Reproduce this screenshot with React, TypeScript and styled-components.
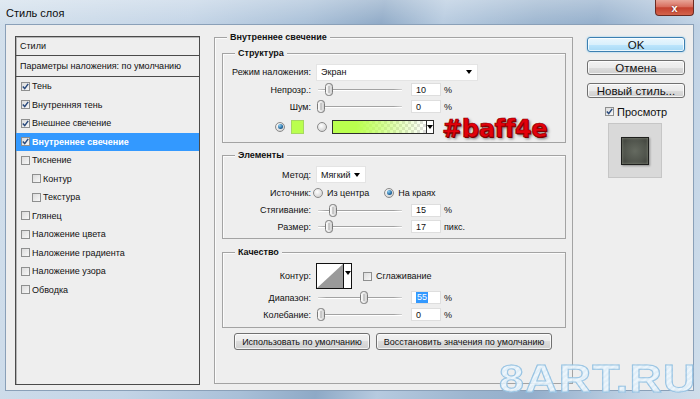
import React from 'react';
import styled, { createGlobalStyle } from 'styled-components';

const GlobalStyle = createGlobalStyle`
  html, body {
    margin: 0;
    padding: 0;
    background: #ffffff;
  }
  body {
    font-family: "Liberation Sans", Arial, sans-serif;
    font-size: 9px;
    color: #111;
  }
`;

const Window = styled.div`
  position: relative;
  width: 700px;
  height: 399px;
  box-sizing: border-box;
  padding: 0 6px 8px 5px;
  display: flex;
  flex-direction: column;
  overflow: hidden;
  background:
    linear-gradient(180deg, rgba(255, 255, 255, 0.3), rgba(255, 255, 255, 0) 26px),
    linear-gradient(100deg, #d3e0ec 0%, #c3d4e6 25%, #a9c0d8 40%, #8ea9c6 50%, #b6cadf 58%, #9cb5cf 70%, #93aecb 78%, #c2d4e6 92%, #d0deeb 100%);
`;

const TitleBar = styled.div`
  height: 24px;
  display: flex;
  justify-content: space-between;
  align-items: flex-start;
  flex-shrink: 0;
`;

const Title = styled.div`
  margin: 6px 0 0 1px;
  font-size: 11px;
  line-height: 14px;
  color: #0c0c0c;
`;

const CloseButton = styled.div`
  width: 39px;
  height: 16px;
  box-sizing: border-box;
  display: flex;
  align-items: center;
  justify-content: center;
  border: 1px solid #6b2b22;
  border-top: none;
  border-radius: 0 0 4px 4px;
  background: linear-gradient(180deg, #e8a598 0%, #d86e5e 45%, #c4412f 52%, #d4644c 100%);
  color: #fff;
  font-size: 11px;
  font-weight: 700;
  text-shadow: 0 0 2px #5a1a10;
`;

const Client = styled.div`
  flex: 1;
  display: flex;
  align-items: flex-start;
  padding: 11px 0 0 9px;
  border: 1px solid #8aa0b8;
  background: #eeeeee;
`;

/* ---------- styles list ---------- */

const StylesPanel = styled.div`
  width: 185px;
  height: 349px;
  box-sizing: border-box;
  flex-shrink: 0;
  display: flex;
  flex-direction: column;
  border: 1px solid #4a4a4a;
  box-shadow: inset 1px 1px 0 #b5b5b5;
  background: #eeeeee;
`;

const PanelHeader = styled.div<{ $h: number }>`
  height: ${p => p.$h}px;
  display: flex;
  align-items: center;
  padding-left: 4px;
  border-bottom: 1px solid #4a4a4a;
`;

const EffectRow = styled.div<{ $indent?: boolean; $active?: boolean }>`
  height: 18.5px;
  display: flex;
  align-items: center;
  gap: 2px;
  padding-left: ${p => (p.$indent ? 16 : 5)}px;
  background: ${p => (p.$active ? '#3399ff' : 'transparent')};
  color: ${p => (p.$active ? '#ffffff' : '#111')};
  font-weight: ${p => (p.$active ? 700 : 400)};
`;

const Box = styled.span`
  width: 9px;
  height: 9px;
  box-sizing: border-box;
  flex-shrink: 0;
  display: inline-flex;
  align-items: center;
  justify-content: center;
  border: 1px solid #8e8f8f;
  background: linear-gradient(135deg, #dcdcdc, #f7f7f7);
`;

const Check = ({ on }: { on?: boolean }) => (
  <Box>
    {on && (
      <svg width="7" height="7" viewBox="0 0 7 7">
        <path d="M0.8 3.6 L2.7 5.6 L6.2 0.9" fill="none" stroke="#2a4a7c" strokeWidth="1.5" />
      </svg>
    )}
  </Box>
);

/* ---------- settings groups ---------- */

const Group = styled.div<{ $outer?: boolean }>`
  box-sizing: border-box;
  border: 1px solid #a3a3a3;
  box-shadow: inset 1px 1px 0 #fbfbfb;
  display: flex;
  flex-direction: column;
  ${p =>
    p.$outer
      ? `
    width: 359px;
    height: 347px;
    margin: 1px 14px 0 14px;
    padding: 0 6px 0 7px;
    flex-shrink: 0;
  `
      : ''}
`;

const Caption = styled.div<{ $indent: number }>`
  align-self: flex-start;
  margin: -7px 0 0 ${p => p.$indent}px;
  padding: 0 3px;
  background: #eeeeee;
  font-weight: 700;
  line-height: 12px;
  color: #111;
`;

const Section = styled(Group)<{ $top: number; $bottom: number }>`
  margin-top: ${p => p.$top}px;
  padding-bottom: ${p => p.$bottom}px;
`;

const FieldRow = styled.div<{ $h: number; $top?: number }>`
  height: ${p => p.$h}px;
  margin-top: ${p => p.$top ?? 0}px;
  display: flex;
  align-items: center;
`;

const Label = styled.span`
  width: 88px;
  margin-right: 5px;
  text-align: right;
  flex-shrink: 0;
`;

const Dropdown = styled.div<{ $w: number }>`
  width: ${p => p.$w}px;
  height: 17px;
  box-sizing: border-box;
  display: flex;
  align-items: center;
  justify-content: space-between;
  padding: 0 5px 0 4px;
  background: #ffffff;
  border: 1px solid #e4e4e4;
`;

const Caret = styled.span`
  width: 0;
  height: 0;
  border-left: 3.5px solid transparent;
  border-right: 3.5px solid transparent;
  border-top: 4px solid #000;
`;

const Track = styled.div`
  position: relative;
  width: 84px;
  height: 13px;
  margin-left: 2px;
  flex-shrink: 0;
  &::before {
    content: '';
    position: absolute;
    left: 0;
    right: 0;
    top: 6px;
    height: 1px;
    background: linear-gradient(90deg, #d0d0d0, #a2a2a2 10%, #a2a2a2 90%, #d0d0d0);
    box-shadow: 0 1px 0 #ffffff;
  }
`;

const Thumb = styled.svg`
  position: absolute;
  top: 0;
`;

const Slider = ({ value }: { value: number }) => (
  <Track>
    <Thumb width="8" height="13" viewBox="0 0 8 13" style={{ left: `${value * 78 - 1}px` }}>
      <defs>
        <linearGradient id="thumbFill" x1="0" x2="1" y1="0" y2="0">
          <stop offset="0" stopColor="#ffffff" />
          <stop offset="1" stopColor="#cfcfcf" />
        </linearGradient>
      </defs>
      <rect x="0.5" y="0.5" width="7" height="12" rx="3" fill="url(#thumbFill)" stroke="#7a7a7a" />
      <line x1="4" y1="3" x2="4" y2="10" stroke="#a8a8a8" />
    </Thumb>
  </Track>
);

const NumberField = styled.div`
  width: 30px;
  height: 13px;
  box-sizing: border-box;
  margin-left: 9px;
  padding-left: 4px;
  display: flex;
  align-items: center;
  background: #ffffff;
  border: 1px solid #dedede;
  flex-shrink: 0;
`;

const Selected = styled.span`
  background: #3399ff;
  color: #ffffff;
  padding: 0 1px;
  line-height: 11px;
`;

const Unit = styled.span`
  margin-left: 3px;
`;

const Radio = styled.span<{ $on?: boolean; $gap?: number }>`
  width: 10px;
  height: 10px;
  box-sizing: border-box;
  flex-shrink: 0;
  margin-left: ${p => p.$gap ?? 0}px;
  border-radius: 50%;
  border: 1px solid #8a8a8a;
  background: radial-gradient(circle at 40% 35%, #ffffff, #d6d6d6 75%);
  display: inline-flex;
  align-items: center;
  justify-content: center;
  &::after {
    content: '';
    display: ${p => (p.$on ? 'block' : 'none')};
    width: 5px;
    height: 5px;
    border-radius: 50%;
    background: radial-gradient(circle at 35% 30%, #8fd0f5, #1e6399 65%, #0d3559);
  }
`;

const OptionText = styled.span`
  margin-left: 4px;
`;

const Swatch = styled.span`
  width: 13px;
  height: 14px;
  box-sizing: border-box;
  margin-left: 6px;
  background: #baff4e;
  border: 1px solid #a6d862;
`;

const GradientPicker = styled.div`
  width: 102px;
  height: 14px;
  box-sizing: border-box;
  margin-left: 5px;
  display: flex;
  border: 1px solid #2e2e2e;
`;

const GradientFill = styled.div`
  flex: 1;
  background:
    linear-gradient(90deg, #baff4e 0%, #baff4e 25%, rgba(186, 255, 78, 0) 100%),
    repeating-conic-gradient(#dedede 0% 25%, #ffffff 0% 50%) 0 0 / 6px 6px;
`;

const PickerCaret = styled.div`
  width: 7px;
  display: flex;
  justify-content: center;
  padding-top: 4px;
  box-sizing: border-box;
  background: #ffffff;
  border-left: 1px solid #2e2e2e;
`;

const ColorNote = styled.span`
  margin: 4px 0 0 8px;
  font-family: "DejaVu Sans", "Liberation Sans", sans-serif;
  font-size: 24px;
  line-height: 24px;
  font-weight: 700;
  color: #e3000b;
  -webkit-text-stroke: 0.7px #8c0000;
  text-shadow: 1px 1px 0 #7a0000, 2px 2px 3px rgba(0, 0, 0, 0.5);
  letter-spacing: -0.3px;
`;

const CurveBox = styled.div`
  width: 36px;
  height: 26px;
  box-sizing: border-box;
  display: flex;
  border: 1px solid #111;
  background: #ffffff;
  flex-shrink: 0;
`;

const CurveCaret = styled.div`
  width: 8px;
  display: flex;
  justify-content: center;
  padding-top: 7px;
  box-sizing: border-box;
  border-left: 1px solid #111;
`;

const CheckLabel = styled.label<{ $gap: number }>`
  display: flex;
  align-items: center;
  gap: 4px;
  margin-left: ${p => p.$gap}px;
`;

const ButtonRow = styled.div`
  display: flex;
  gap: 6px;
  margin: 5px 0 0 12px;
`;

const PushButton = styled.div<{ $w: number }>`
  width: ${p => p.$w}px;
  height: 17px;
  box-sizing: border-box;
  display: flex;
  align-items: center;
  justify-content: center;
  border: 1px solid #707070;
  border-radius: 3px;
  background: linear-gradient(180deg, #f2f2f2, #ebebeb 50%, #dddddd 50%, #cfcfcf);
  box-shadow: inset 0 0 0 1px rgba(255, 255, 255, 0.75);
  color: #111;
`;

/* ---------- right column ---------- */

const SideColumn = styled.div`
  width: 98px;
  margin-top: 1px;
  display: flex;
  flex-direction: column;
  flex-shrink: 0;
`;

const DialogButton = styled.div<{ $primary?: boolean }>`
  height: 15px;
  box-sizing: border-box;
  margin-bottom: 8px;
  display: flex;
  align-items: center;
  justify-content: center;
  font-size: 11.5px;
  color: #111;
  border-radius: 3px;
  border: 1px solid ${p => (p.$primary ? '#3c7fb1' : '#707070')};
  background: ${p =>
    p.$primary
      ? 'linear-gradient(180deg, #eaf6fd, #d9f0fc 50%, #bee6fd 50%, #a7d9f5)'
      : 'linear-gradient(180deg, #f2f2f2, #ebebeb 50%, #dddddd 50%, #cfcfcf)'};
  box-shadow: inset 0 0 0 1px rgba(255, 255, 255, 0.75)
    ${p => (p.$primary ? ', 0 0 2px #7cc4ee' : '')};
`;

const PreviewToggle = styled.label`
  height: 13px;
  margin: -1px 0 0 18px;
  display: flex;
  align-items: center;
  gap: 3px;
  font-size: 11px;
  color: #111;
`;

const PreviewFrame = styled.div`
  width: 54px;
  height: 55px;
  box-sizing: border-box;
  margin: 5px 0 0 21px;
  display: flex;
  align-items: center;
  justify-content: center;
  background: #d9d9d9;
  border: 1px solid #c6c6c6;
`;

const PreviewTile = styled.div`
  width: 28px;
  height: 28px;
  box-sizing: border-box;
  border: 1px solid #1e1f1d;
  background: radial-gradient(circle at 50% 50%, #656a60, #50544c 60%, #393b36);
  box-shadow: inset 0 0 3px #8a9080, 1px 1px 2px rgba(0, 0, 0, 0.35);
`;

const Watermark = styled.div`
  position: absolute;
  left: 499px;
  top: 360px;
  font-size: 38px;
  line-height: 38px;
  font-weight: 700;
  letter-spacing: 1px;
  transform: scaleX(1.18);
  transform-origin: left top;
  color: transparent;
  background: repeating-linear-gradient(135deg, rgba(196, 226, 246, 0.75) 0 2px, rgba(160, 204, 234, 0.75) 2px 4px);
  -webkit-background-clip: text;
  background-clip: text;
  -webkit-text-stroke: 1px rgba(125, 178, 218, 0.65);
  text-shadow: 0 0 1px rgba(255, 255, 255, 0.6);
  pointer-events: none;
`;

const effects = [
  { label: 'Тень', on: true },
  { label: 'Внутренняя тень', on: true },
  { label: 'Внешнее свечение', on: true },
  { label: 'Внутреннее свечение', on: true, active: true },
  { label: 'Тиснение' },
  { label: 'Контур', indent: true },
  { label: 'Текстура', indent: true },
  { label: 'Глянец' },
  { label: 'Наложение цвета' },
  { label: 'Наложение градиента' },
  { label: 'Наложение узора' },
  { label: 'Обводка' },
];

const SliderField = ({
  label,
  value,
  text,
  unit,
  h,
  highlight,
}: {
  label: string;
  value: number;
  text: string;
  unit: string;
  h: number;
  highlight?: boolean;
}) => (
  <FieldRow $h={h}>
    <Label>{label}</Label>
    <Slider value={value} />
    <NumberField>{highlight ? <Selected>{text}</Selected> : text}</NumberField>
    <Unit>{unit}</Unit>
  </FieldRow>
);

const App: React.FC = () => (
  <>
    <GlobalStyle />
    <Window>
      <TitleBar>
        <Title>Стиль слоя</Title>
        <CloseButton>x</CloseButton>
      </TitleBar>

      <Client>
        <StylesPanel>
          <PanelHeader $h={18}>Стили</PanelHeader>
          <PanelHeader $h={20}>Параметры наложения: по умолчанию</PanelHeader>
          {effects.map(e => (
            <EffectRow key={e.label} $indent={e.indent} $active={e.active}>
              <Check on={e.on} />
              <span>{e.label}</span>
            </EffectRow>
          ))}
        </StylesPanel>

        <Group $outer>
          <Caption $indent={5}>Внутреннее свечение</Caption>

          <Section $top={10} $bottom={7}>
            <Caption $indent={12}>Структура</Caption>
            <FieldRow $h={18} $top={4}>
              <Label>Режим наложения:</Label>
              <Dropdown $w={162}>
                <span>Экран</span>
                <Caret />
              </Dropdown>
            </FieldRow>
            <SliderField label="Непрозр.:" value={0.1} text="10" unit="%" h={17} />
            <SliderField label="Шум:" value={0} text="0" unit="%" h={17} />
            <FieldRow $h={17} $top={3}>
              <Radio $on $gap={52} />
              <Swatch />
              <Radio $gap={13} />
              <GradientPicker>
                <GradientFill />
                <PickerCaret>
                  <Caret />
                </PickerCaret>
              </GradientPicker>
              <ColorNote>#baff4e</ColorNote>
            </FieldRow>
          </Section>

          <Section $top={12} $bottom={3}>
            <Caption $indent={12}>Элементы</Caption>
            <FieldRow $h={17} $top={5}>
              <Label>Метод:</Label>
              <Dropdown $w={50}>
                <span>Мягкий</span>
                <Caret />
              </Dropdown>
            </FieldRow>
            <FieldRow $h={19}>
              <Label style={{ marginRight: 2 }}>Источник:</Label>
              <Radio />
              <OptionText>Из центра</OptionText>
              <Radio $on $gap={15} />
              <OptionText>На краях</OptionText>
            </FieldRow>
            <SliderField label="Стягивание:" value={0.15} text="15" unit="%" h={16} />
            <SliderField label="Размер:" value={0.1} text="17" unit="пикс." h={17} />
          </Section>

          <Section $top={13} $bottom={4}>
            <Caption $indent={12}>Качество</Caption>
            <FieldRow $h={26} $top={5}>
              <Label>Контур:</Label>
              <CurveBox>
                <svg width="26" height="24" viewBox="0 0 26 24">
                  <polygon points="0,24 26,0 26,24" fill="#9a9a9a" />
                </svg>
                <CurveCaret>
                  <Caret />
                </CurveCaret>
              </CurveBox>
              <CheckLabel $gap={11}>
                <Check />
                <span>Сглаживание</span>
              </CheckLabel>
            </FieldRow>
            <SliderField label="Диапазон:" value={0.55} text="55" unit="%" h={17} highlight />
            <SliderField label="Колебание:" value={0} text="0" unit="%" h={17} />
          </Section>

          <ButtonRow>
            <PushButton $w={136}>Использовать по умолчанию</PushButton>
            <PushButton $w={176}>Восстановить значения по умолчанию</PushButton>
          </ButtonRow>
        </Group>

        <SideColumn>
          <DialogButton $primary>OK</DialogButton>
          <DialogButton>Отмена</DialogButton>
          <DialogButton>Новый стиль...</DialogButton>
          <PreviewToggle>
            <Check on />
            <span>Просмотр</span>
          </PreviewToggle>
          <PreviewFrame>
            <PreviewTile />
          </PreviewFrame>
        </SideColumn>
      </Client>

      <Watermark>8ART.RU</Watermark>
    </Window>
  </>
);

export default App;
